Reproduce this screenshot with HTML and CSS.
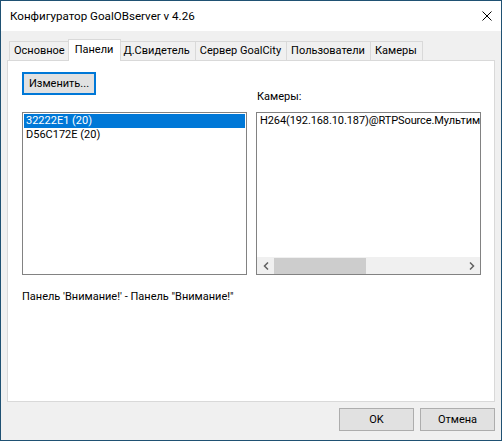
FILE: index.html
```html
<!DOCTYPE html>
<html lang="ru">
<head>
    <meta charset="UTF-8">
    <title>Конфигуратор GoalOBserver v 4.26</title>
    <link rel="stylesheet" href="styles.css">
</head>
<body>
<div class="window">
    <div class="titlebar">
        <span class="title">Конфигуратор GoalOBserver v 4.26</span>
        <svg class="close" width="10" height="10" viewBox="0 0 10 10">
            <path d="M0.5 0.5 L9.5 9.5 M9.5 0.5 L0.5 9.5" stroke="#000" stroke-width="1" fill="none"/>
        </svg>
    </div>
    <div class="client">
        <div class="tabs">
            <div class="tab">Основное</div>
            <div class="tab active">Панели</div>
            <div class="tab">Д.Свидетель</div>
            <div class="tab">Сервер GoalCity</div>
            <div class="tab">Пользователи</div>
            <div class="tab">Камеры</div>
        </div>
        <div class="page">
            <div class="grid">
                <button class="btn default">Изменить...</button>
                <div class="caption">Камеры:</div>
                <div class="listbox panels">
                    <div class="item selected">32222E1 (20)</div>
                    <div class="item">D56C172E (20)</div>
                </div>
                <div class="listbox cams">
                    <div class="rows">
                        <div class="item tight">H264(192.168.10.187)@RTPSource.Мультим</div>
                    </div>
                    <div class="hscroll">
                        <div class="arrow">
                            <svg width="6" height="8" viewBox="0 0 6 8"><path d="M5 0.5 L1.5 4 L5 7.5" stroke="#606060" stroke-width="1.5" fill="none"/></svg>
                        </div>
                        <div class="track"><div class="thumb"></div></div>
                        <div class="arrow">
                            <svg width="6" height="8" viewBox="0 0 6 8"><path d="M1 0.5 L4.5 4 L1 7.5" stroke="#606060" stroke-width="1.5" fill="none"/></svg>
                        </div>
                    </div>
                </div>
            </div>
            <div class="status">Панель 'Внимание!' - Панель "Внимание!"</div>
        </div>
        <div class="footer">
            <button class="btn">OK</button>
            <button class="btn">Отмена</button>
        </div>
    </div>
</div>
</body>
</html>
```

FILE: styles.css
```css
body {
    margin: 0;
    font-family: Roboto, "Liberation Sans", sans-serif;
    font-size: 11px;
    color: #000;
    background: #fff;
}

.window {
    width: 502px;
    height: 441px;
    box-sizing: border-box;
    border: 1px solid #1f5173;
    display: flex;
    flex-direction: column;
}

.titlebar {
    height: 30px;
    flex: none;
    background: #fff;
    display: flex;
    align-items: center;
    justify-content: space-between;
    padding: 0 9px 0 9px;
}

.title {
    font-size: 11.6px;
}

.client {
    flex: 1;
    background: #f0f0f0;
    display: flex;
    flex-direction: column;
    padding-top: 8px;
}

/* tab strip */
.tabs {
    height: 21px;
    display: flex;
    align-items: flex-end;
    padding-left: 8px;
}

.tab {
    height: 19px;
    box-sizing: border-box;
    border: 1px solid #d9d9d9;
    border-bottom: none;
    margin-left: -1px;
    padding: 0 5px 0 4px;
    line-height: 18px;
    background: #f0f0f0;
}

.tab:first-child {
    margin-left: 0;
}

.tab.active {
    height: 22px;
    margin: 0 -2px -1px -3px;
    padding: 0 7px 0 6px;
    line-height: 20px;
    background: #fff;
    position: relative;
    z-index: 1;
}

.page {
    height: 342px;
    box-sizing: border-box;
    margin: 0 6px;
    border: 1px solid #d9d9d9;
    background: #fff;
    padding: 11px 0 0 14px;
}

.grid {
    display: grid;
    grid-template-columns: 225px 225px;
    grid-template-rows: 23px 17px 163px;
    column-gap: 9px;
}

.btn {
    font: inherit;
    color: #000;
    background: #e1e1e1;
    border: 1px solid #adadad;
    width: 75px;
    height: 23px;
    padding: 0;
}

.btn.default {
    grid-column: 1;
    grid-row: 1;
    width: 74px;
    border: 2px solid #0078d7;
}

.caption {
    grid-column: 2;
    grid-row: 1 / 3;
    align-self: end;
    line-height: 15px;
    margin-bottom: 8px;
    padding-left: 1px;
}

.listbox {
    grid-row: 3;
    box-sizing: border-box;
    border: 1px solid #828282;
    background: #fff;
    overflow: hidden;
}

.panels {
    grid-column: 1;
    padding: 1px 1px 0;
}

.cams {
    grid-column: 2;
    display: flex;
    flex-direction: column;
}

.item {
    height: 14px;
    line-height: 14px;
    padding-left: 2px;
    white-space: nowrap;
}

.item.selected {
    background: #0078d7;
    color: #fff;
}

.item.tight {
    letter-spacing: -0.1px;
}

.rows {
    flex: 1;
    padding: 1px 0 0 1px;
    overflow: hidden;
}

.hscroll {
    height: 17px;
    display: flex;
    background: #f0f0f0;
}

.arrow {
    width: 17px;
    display: flex;
    align-items: center;
    justify-content: center;
}

.track {
    flex: 1;
    display: flex;
    align-items: center;
}

.thumb {
    width: 92px;
    height: 16px;
    background: #cdcdcd;
}

.status {
    margin-top: 14px;
    line-height: 15px;
}

.footer {
    display: flex;
    justify-content: flex-end;
    gap: 6px;
    padding: 6px 6px 0 0;
}
```
